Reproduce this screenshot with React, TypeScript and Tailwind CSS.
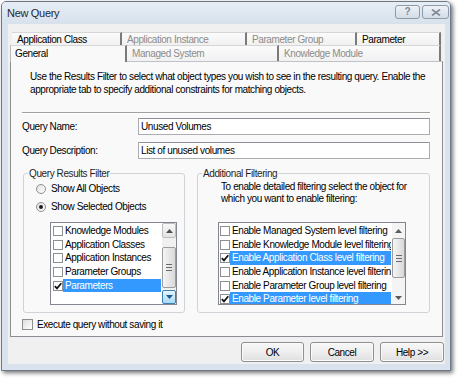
import React from "react";
import clsx from "clsx";

interface ListItem {
  label: string;
  checked?: boolean;
  selected?: boolean;
}

const resultTypes: ListItem[] = [
  { label: "Knowledge Modules" },
  { label: "Application Classes" },
  { label: "Application Instances" },
  { label: "Parameter Groups" },
  { label: "Parameters", checked: true, selected: true },
];

const filterLevels: ListItem[] = [
  { label: "Enable Managed System level filtering" },
  { label: "Enable Knowledge Module level filtering" },
  { label: "Enable Application Class level filtering", checked: true, selected: true },
  { label: "Enable Application Instance level filtering" },
  { label: "Enable Parameter Group level filtering" },
  { label: "Enable Parameter level filtering", checked: true, selected: true },
];

const CheckMark = () => (
  <svg width="8" height="8" viewBox="0 0 8 8" className="block">
    <path d="M0.8 4.1 L3 6.4 L7.3 1.3" fill="none" stroke="#111" strokeWidth="1.7" />
  </svg>
);

const ListCheck = ({ checked }: { checked?: boolean }) => (
  <span className="flex h-[10px] w-[10px] shrink-0 items-center justify-center border border-[#8e8f8f] bg-white">
    {checked && <CheckMark />}
  </span>
);

const Arrow = ({ up, color }: { up?: boolean; color: string }) => (
  <svg width="7" height="4" viewBox="0 0 7 4" className="block">
    <path d={up ? "M0 4 L3.5 0 L7 4Z" : "M0 0 L3.5 4 L7 0Z"} fill={color} />
  </svg>
);

const Grip = () => (
  <>
    <span className="h-px w-[6px] bg-[#6b6b6b]" />
    <span className="h-px w-[6px] bg-[#6b6b6b]" />
    <span className="h-px w-[6px] bg-[#6b6b6b]" />
  </>
);

const ListRow = ({ item }: { item: ListItem }) => (
  <div className="flex h-[13.7px] shrink-0 items-stretch">
    <span className="flex items-center">
      <ListCheck checked={item.checked} />
    </span>
    <span
      className={clsx(
        "flex-1 overflow-hidden whitespace-nowrap pl-[2px] leading-[13.7px]",
        item.selected && "bg-[#3399ff] text-white"
      )}
    >
      {item.label}
    </span>
  </div>
);

const Tab = ({
  label,
  className,
  dim,
}: {
  label: string;
  className: string;
  dim?: boolean;
}) => (
  <div
    className={clsx(
      "flex items-center whitespace-nowrap border-r-2 border-t border-r-[#7b7b7b] border-t-[#d6d6d6] bg-gradient-to-b from-[#fbfbfb] to-[#f1f1f1] pl-[5px]",
      dim ? "text-[#8c8c8c]" : "text-black",
      className
    )}
  >
    {label}
  </div>
);

const Button = ({ label, className }: { label: string; className: string }) => (
  <button
    className={clsx(
      "flex h-[20px] items-center justify-center rounded-[3px] border border-[#8f8f8f] bg-gradient-to-b from-[#f8f8f8] via-[#eeeeee] to-[#e0e0e0] text-black shadow-[inset_0_0_0_1px_#fbfbfb]",
      className
    )}
  >
    {label}
  </button>
);

export default function App() {
  return (
    <div className="h-[378px] w-[458px] overflow-hidden bg-white pl-px pt-px font-['Liberation_Sans',Arial,sans-serif] text-[10px] leading-[13px] tracking-[-0.4px] text-black">
      <div className="flex h-[370px] w-[450px] flex-col rounded-t-[5px] border border-[#6c7886] bg-[#dae3ed] shadow-[2px_2px_4px_rgba(0,0,0,0.55)]">
        {/* Title bar */}
        <div className="flex h-[22px] shrink-0 items-start justify-between rounded-t-[4px] bg-gradient-to-b from-[#e6edf5] to-[#d7e1ec] pl-[5px] pr-[1px]">
          <span className="mt-[4px] text-[11px] leading-[14px] tracking-[-0.3px] text-[#1e2733]">
            New Query
          </span>
          <div className="mt-[3px] flex gap-[2px]">
            <div className="flex h-[14px] w-[25px] items-center justify-center rounded-[3px] border border-[#8d9aab] bg-gradient-to-b from-[#eef2f7] to-[#d3dce7] text-[10px] font-bold leading-[10px] tracking-normal text-[#7e8893]">
              ?
            </div>
            <div className="flex h-[14px] w-[27px] items-center justify-center rounded-[3px] border border-[#8d9aab] bg-gradient-to-b from-[#eef2f7] to-[#d3dce7]">
              <svg width="10" height="7" viewBox="0 0 10 7" className="block">
                <path d="M1 0.5 L9 6.5 M9 0.5 L1 6.5" stroke="#7e8893" strokeWidth="1.6" />
              </svg>
            </div>
          </div>
        </div>

        {/* Client area */}
        <div className="ml-[6px] mr-[5px] flex h-[340px] flex-col bg-[#f0f0f0]">
          {/* Tabs */}
          <div className="ml-[4px] mt-[8px] flex h-[13px]">
            <Tab label="Application Class" className="w-[110px] pl-[4px]" />
            <Tab label="Application Instance" className="w-[125px]" dim />
            <Tab label="Parameter Group" className="w-[110px]" dim />
            <Tab label="Parameter" className="w-[84px]" />
          </div>
          <div className="relative z-10 ml-[2px] flex h-[16px]">
            <div className="flex h-[17px] w-[117px] items-center border-l border-r-2 border-t border-l-[#b9b9b9] border-r-[#7b7b7b] border-t-[#d6d6d6] bg-[#f9f9f9] pb-px pl-[4px]">
              General
            </div>
            <Tab label="Managed System" className="w-[152px] pl-[4px]" dim />
            <Tab label="Knowledge Module" className="w-[162px]" dim />
          </div>

          {/* Tab page */}
          <div className="ml-[2px] flex h-[276px] w-[433px] flex-col border border-[#8a8d94] border-t-[#bfc3c9] bg-[#f9f9f9]">
            <div className="mt-[8px] whitespace-nowrap pl-[19px]">
              Use the Results Filter to select what object types you wish to see in the resulting query. Enable the
              <br />
              appropriate tab to specify additional constraints for matching objects.
            </div>

            <div className="ml-[11px] mt-[16px] h-[2px] w-[408px] border-b border-t border-b-white border-t-[#a0a0a0]" />

            <div className="mt-[4px] flex items-center pl-[11px]">
              <span className="w-[116px]">Query Name:</span>
              <div className="flex h-[17px] w-[292px] items-center border border-[#abadb3] border-t-[#8e9198] bg-white pl-[2px]">
                Unused Volumes
              </div>
            </div>
            <div className="mt-[7px] flex items-center pl-[11px]">
              <span className="w-[116px]">Query Description:</span>
              <div className="flex h-[17px] w-[292px] items-center border border-[#abadb3] border-t-[#8e9198] bg-white pl-[2px]">
                List of unused volumes
              </div>
            </div>

            <div className="ml-[12px] mt-[8px] flex gap-[12px]">
              {/* Query Results Filter */}
              <fieldset className="h-[146px] w-[162px] rounded-[3px] border border-[#d0d4d9]">
                <legend className="ml-[4px] px-[1px] leading-[13px] text-[#1f1f1f]">Query Results Filter</legend>
                <div className="flex flex-col pl-[12px] pt-[2px]">
                  <label className="flex h-[13px] items-center gap-[5px]">
                    <span className="h-[10px] w-[10px] rounded-full border border-[#8e8f8f] bg-gradient-to-br from-[#e2e2e2] to-white" />
                    Show All Objects
                  </label>
                  <label className="mt-[5px] flex h-[13px] items-center gap-[5px]">
                    <span className="flex h-[10px] w-[10px] items-center justify-center rounded-full border border-[#8e8f8f] bg-gradient-to-br from-[#e2e2e2] to-white">
                      <span className="h-[4px] w-[4px] rounded-full bg-[#1f1f1f]" />
                    </span>
                    Show Selected Objects
                  </label>
                </div>
                <div className="ml-[26px] mt-[9px] flex h-[83px] w-[127px] border border-[#828790] bg-white">
                  <div className="flex flex-1 flex-col overflow-hidden pl-[2px] pr-px pt-px">
                    {resultTypes.map((item) => (
                      <ListRow key={item.label} item={item} />
                    ))}
                  </div>
                  <div className="flex w-[14px] shrink-0 flex-col bg-[#f0f0f0]">
                    <div className="flex h-[15px] items-center justify-center rounded-[2px] border border-[#bdbdbd] bg-gradient-to-b from-[#f8f8f8] to-[#e4e4e4]">
                      <Arrow up color="#4e4e4e" />
                    </div>
                    <div className="h-[9px]" />
                    <div className="flex h-[41px] flex-col items-center justify-center gap-[2px] rounded-[2px] border border-[#9c9c9c] bg-gradient-to-r from-[#f5f5f5] to-[#d9d9d9]">
                      <Grip />
                    </div>
                    <div className="h-[2px]" />
                    <div className="flex h-[14px] items-center justify-center rounded-[2px] border border-[#3c7fb1] bg-gradient-to-b from-[#e5f5fd] to-[#a8d9f5]">
                      <Arrow color="#1f5a8c" />
                    </div>
                  </div>
                </div>
              </fieldset>

              {/* Additional Filtering */}
              <fieldset className="h-[146px] w-[233px] rounded-[3px] border border-[#d0d4d9]">
                <legend className="ml-[4px] px-[1px] leading-[13px] text-[#1f1f1f]">Additional Filtering</legend>
                <div className="whitespace-nowrap pl-[23px] pt-[1px] leading-[12px]">
                  To enable detailed filtering select the object for
                  <br />
                  which you want to enable filtering:
                </div>
                <div className="ml-[20px] mt-[17px] flex h-[83px] w-[188px] border border-[#828790] bg-white">
                  <div className="flex flex-1 flex-col overflow-hidden pl-px pr-px pt-px">
                    {filterLevels.map((item) => (
                      <ListRow key={item.label} item={item} />
                    ))}
                  </div>
                  <div className="flex w-[13px] shrink-0 flex-col bg-[#f4f4f4]">
                    <div className="flex h-[15px] items-center justify-center">
                      <Arrow up color="#5a5a5a" />
                    </div>
                    <div className="flex h-[40px] flex-col items-center justify-center gap-[2px] rounded-[2px] border border-[#9c9c9c] bg-gradient-to-r from-[#f5f5f5] to-[#d9d9d9]">
                      <Grip />
                    </div>
                    <div className="h-[13px]" />
                    <div className="flex h-[13px] items-center justify-center">
                      <Arrow color="#5a5a5a" />
                    </div>
                  </div>
                </div>
              </fieldset>
            </div>

            <label className="ml-[11px] mt-[6px] flex h-[11px] items-center gap-[4px]">
              <span className="h-[11px] w-[11px] border border-[#8e8f8f] bg-gradient-to-br from-[#dedede] to-white" />
              Execute query without saving it
            </label>
          </div>

          {/* Buttons */}
          <div className="mt-[5px] flex justify-end gap-[6px] pr-px">
            <Button label="OK" className="w-[63px]" />
            <Button label="Cancel" className="w-[64px]" />
            <Button label="Help >>" className="w-[64px]" />
          </div>
        </div>
      </div>
    </div>
  );
}
